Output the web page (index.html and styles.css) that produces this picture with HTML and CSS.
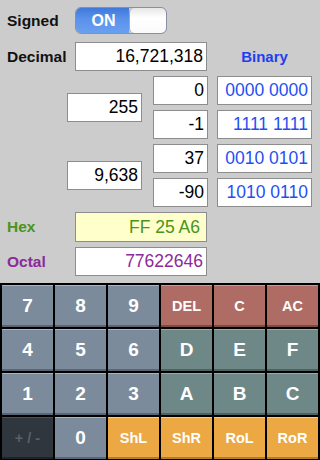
FILE: index.html
```html
<!DOCTYPE html>
<html>
<head>
<meta charset="utf-8">
<link rel="stylesheet" href="styles.css">
</head>
<body>
<div class="app">
  <div class="top">
    <div class="row signed-row">
      <div class="label">Signed</div>
      <div class="toggle">
        <div class="toggle-on">ON</div>
        <div class="toggle-knob"></div>
      </div>
    </div>
    <div class="row decimal-row">
      <div class="label">Decimal</div>
      <div class="field wide">16,721,318</div>
      <div class="binary-label">Binary</div>
    </div>
    <div class="bytes">
      <div class="group">
        <div class="field word">255</div>
        <div class="pair">
          <div class="byte-row">
            <div class="field byte">0</div>
            <div class="field bin">0000 0000</div>
          </div>
          <div class="byte-row">
            <div class="field byte">-1</div>
            <div class="field bin">1111 1111</div>
          </div>
        </div>
      </div>
      <div class="group">
        <div class="field word">9,638</div>
        <div class="pair">
          <div class="byte-row">
            <div class="field byte">37</div>
            <div class="field bin">0010 0101</div>
          </div>
          <div class="byte-row">
            <div class="field byte">-90</div>
            <div class="field bin">1010 0110</div>
          </div>
        </div>
      </div>
    </div>
    <div class="row hex-row">
      <div class="label hex-label">Hex</div>
      <div class="field wide hex">FF 25 A6</div>
    </div>
    <div class="row octal-row">
      <div class="label octal-label">Octal</div>
      <div class="field wide octal">77622646</div>
    </div>
  </div>
  <div class="keypad">
    <div class="key num">7</div>
    <div class="key num">8</div>
    <div class="key num">9</div>
    <div class="key red small">DEL</div>
    <div class="key red small">C</div>
    <div class="key red small">AC</div>
    <div class="key num">4</div>
    <div class="key num">5</div>
    <div class="key num">6</div>
    <div class="key hexk">D</div>
    <div class="key hexk">E</div>
    <div class="key hexk">F</div>
    <div class="key num">1</div>
    <div class="key num">2</div>
    <div class="key num">3</div>
    <div class="key hexk">A</div>
    <div class="key hexk">B</div>
    <div class="key hexk">C</div>
    <div class="key dark small">+ / -</div>
    <div class="key num">0</div>
    <div class="key orange small">ShL</div>
    <div class="key orange small">ShR</div>
    <div class="key orange small">RoL</div>
    <div class="key orange small">RoR</div>
  </div>
</div>
</body>
</html>
```

FILE: styles.css
```css
* { box-sizing: border-box; }
html, body {
  margin: 0;
  padding: 0;
  width: 320px;
  height: 460px;
  overflow: hidden;
  font-family: "Liberation Sans", Arial, sans-serif;
}
.app {
  width: 320px;
  height: 460px;
  background: #cbcccb;
  display: flex;
  flex-direction: column;
}
.top {
  padding-left: 7px;
  display: flex;
  flex-direction: column;
}
.row {
  display: flex;
  align-items: center;
}
.label {
  width: 68px;
  font-weight: bold;
  font-size: 15.5px;
  color: #111;
}
.signed-row { margin-top: 7px; height: 27px; }
.decimal-row { margin-top: 8px; height: 29px; }
.hex-row { margin-top: 5px; height: 30px; }
.octal-row { margin-top: 5px; height: 29px; }

.toggle {
  width: 92px;
  height: 27px;
  display: flex;
  border: 1px solid #8592a6;
  border-radius: 6px;
  overflow: hidden;
}
.toggle-on {
  width: 53px;
  background: linear-gradient(#3f78dc, #5b92ea 45%, #6aa0f0 100%);
  color: #fff;
  font-weight: bold;
  font-size: 16px;
  display: flex;
  align-items: center;
  justify-content: center;
  padding-left: 2px;
}
.toggle-knob {
  flex: 1;
  background: linear-gradient(#e6e6e6, #ffffff 40%, #fafafa);
  border-left: 1px solid #a8a8a8;
  border-radius: 5px;
}

.field {
  height: 29px;
  background: #fff;
  border: 1px solid #8d8d8d;
  font-size: 17.5px;
  color: #000;
  display: flex;
  align-items: center;
  justify-content: flex-end;
  padding-right: 3px;
}
.wide { width: 132px; height: 100%; }
.binary-label {
  margin-left: 10px;
  width: 95px;
  text-align: center;
  font-weight: bold;
  font-size: 15px;
  color: #1d3ff0;
}
.bytes {
  margin-top: 5px;
  display: flex;
  flex-direction: column;
  gap: 5px;
}
.group {
  display: flex;
  align-items: center;
}
.word { width: 75px; margin-left: 60px; }
.pair {
  margin-left: 11px;
  display: flex;
  flex-direction: column;
  gap: 5px;
}
.byte-row { display: flex; }
.byte { width: 55px; }
.bin {
  width: 95px;
  margin-left: 9px;
  color: #1f4ff2;
}
.hex-label { color: #4a9419; }
.octal-label { color: #8c2a9a; }
.hex {
  background: #ffffcc;
  color: #4a9419;
  padding-right: 6px;
}
.octal { color: #8c2a9a; }

.keypad {
  margin-top: 7px;
  flex: 1;
  background: #000;
  display: grid;
  grid-template-columns: repeat(6, 51px);
  grid-template-rows: repeat(4, 42px);
  gap: 2px;
  padding: 2px 2px 1px 2px;
}
.key {
  display: flex;
  align-items: center;
  justify-content: center;
  color: #fff;
  font-weight: bold;
  font-size: 19px;
  padding-bottom: 1px;
}
.small { font-size: 14.5px; }
.num {
  background: #7c8b9b;
  box-shadow: inset 0 1px 0 #a8b4c0, inset 0 -2px 0 #5a6674;
}
.red {
  background: #af6c64;
  box-shadow: inset 0 1px 0 #d0968e, inset 0 -2px 0 #7e4a44;
}
.hexk {
  background: #6e8888;
  box-shadow: inset 0 1px 0 #98acac, inset 0 -2px 0 #4e6262;
}
.orange {
  background: #eba843;
  box-shadow: inset 0 1px 0 #f6cf8c, inset 0 -2px 0 #b47c26;
}
.dark {
  background: #30363e;
  color: #586069;
  box-shadow: inset 0 1px 0 #485058, inset 0 -2px 0 #1e2228;
}
```
